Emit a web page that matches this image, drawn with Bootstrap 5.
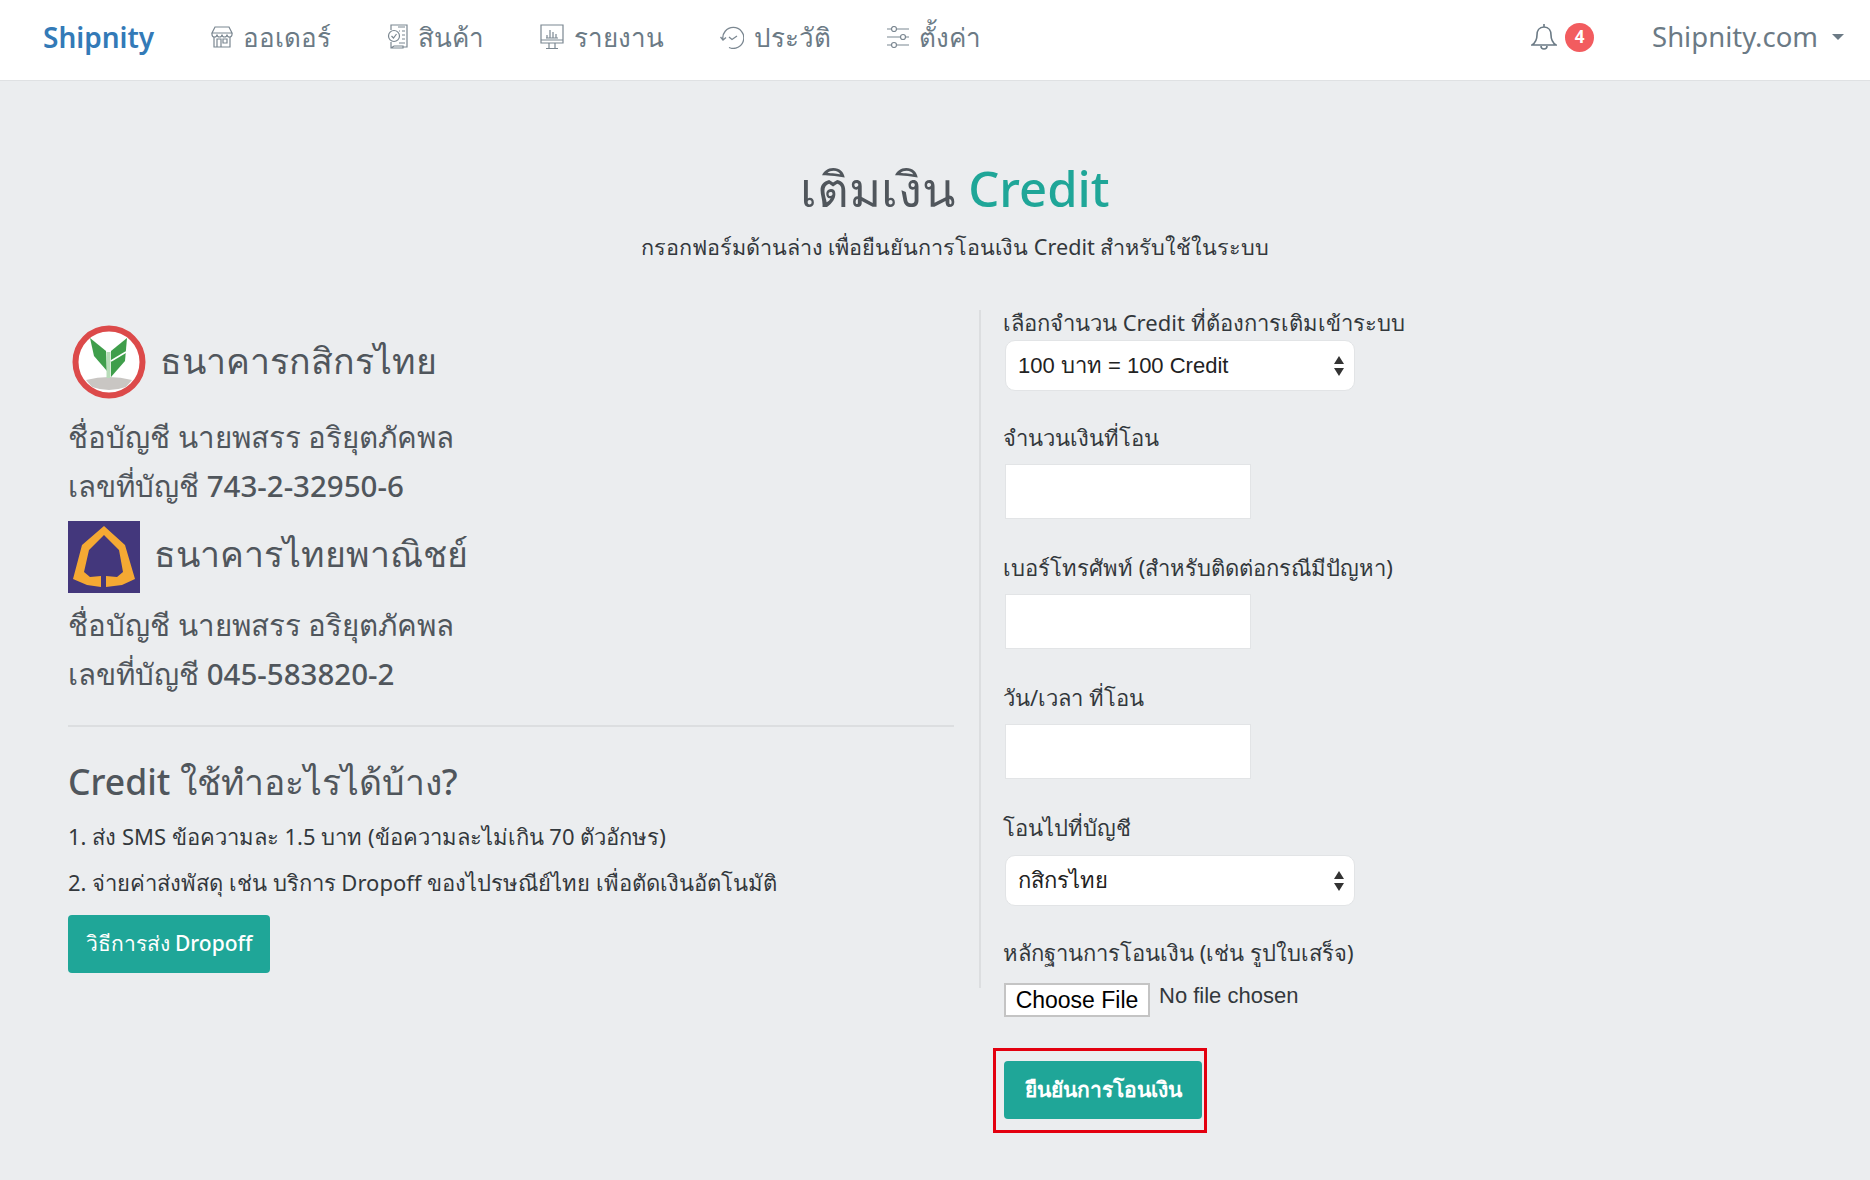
<!DOCTYPE html>
<html lang="th">
<head>
    <meta charset="UTF-8">
    <meta name="viewport" content="width=device-width, initial-scale=1.0">
    <title>เติมเงิน Credit</title>
    <link href="https://cdn.jsdelivr.net/npm/bootstrap@5.3.0/dist/css/bootstrap.min.css" rel="stylesheet">
    <style>
        body { background: #ebedef; font-family: "Noto Sans", "Open Sans", sans-serif; color: #50565c; }
        .top-bar { height: 81px; background: #fff; border-bottom: 1px solid #dfe1e3; padding: 0 26px 6px 43px; }
        .brand-name { color: #337ab7; font-size: 28px; font-weight: 600; width: 168px; text-decoration: none; }
        .menu-link { color: #6b7a85; font-size: 26px; text-decoration: none; margin-right: 56px; }
        .menu-link svg { margin-right: 10px; }
        .alert-dot { width: 29px; height: 29px; background: #f25c5f; color: #fff; font-size: 17px; font-weight: 700; }
        .site-name { color: #6b7a85; font-size: 27.500px; margin-left: 58px; }
        .site-caret { border-top: 6px solid #6b7a85; border-left: 6px solid transparent; border-right: 6px solid transparent; margin-left: 14px; }
        .head-block { padding-left: 40px; }
        .page-title { font-size: 49px; font-weight: 500; margin: 0; padding-top: 74px; line-height: 66px; color: #50565c; }
        .page-title span { color: #1fa698; }
        .page-sub { font-size: 21.600px; color: #33383c; margin: 10px 0 46px; line-height: 32px; }
        .pay-wrap { padding-left: 68px; }
        .left-pane { width: 886px; padding-top: 16px; }
        .right-pane { margin-left: 25px; }
        .bank-row { gap: 14px; }
        .bank-name { font-size: 35.700px; font-weight: 400; margin: 0; }
        .bank-one { padding-bottom: 3px; }
        .bank-two { padding-bottom: 8px; }
        .acc-one { margin-top: 13px; }
        .acc-two { margin-top: 7px; }
        .bank-row-two { margin-top: 11px; }
        .acc-line { font-size: 29.500px; font-weight: 500; margin: 0; line-height: 49px; }
        .split-line { border-top: 2px solid #dcdee0; opacity: 1; margin: 27px 0 24px; }
        .use-title { font-size: 35.500px; font-weight: 500; margin: 0 0 2px; line-height: 60px; }
        .use-line { font-size: 22px; color: #33383c; margin: 0; line-height: 46px; }
        .teal-btn { background: #1fa698; color: #fff; font-size: 21px; font-weight: 500; border: 0; border-radius: 4px; }
        .teal-btn:hover { background: #1c978a; color: #fff; }
        .how-btn { width: 202px; height: 58px; margin-top: 10px; }
        .field-stack { border-left: 2px solid #dcdee0; padding: 0 0 21px 22px; }
        .field-label { display: block; font-size: 22px; color: #33383c; margin: 33px 0 12px; line-height: 30px; }
        .field-label.first-label { margin: 1px 0 6px; line-height: 24px; }
        .field-label.after-pick { margin-top: 31px; }
        .field-label.before-pick { margin-bottom: 13px; }
        .field-label.last-label { margin-bottom: 0; }
        .pick-box.form-select { width: 350px; height: 51px; margin-left: 2px; font-size: 22px; color: #222; border: 1px solid #e2e4e6; border-radius: 10px; padding: 0 12px;
            font-family: "Liberation Sans", "Noto Sans", sans-serif;
            background-size: 12px 22px; background-position: right 9px center;
            background-image: url("data:image/svg+xml,%3Csvg xmlns='http://www.w3.org/2000/svg' viewBox='0 0 12 22'%3E%3Cpath fill='%23333' d='M6 1l5 8H1zM6 21l5-8H1z'/%3E%3C/svg%3E"); }
        .plain-box.form-control { width: 246px; height: 55px; margin-left: 2px; border: 1px solid #e2e4e6; border-radius: 0; }
        .file-row { margin: -5px 0 0 25px; }
        .file-btn { width: 146px; height: 34px; background: #fff; border: 2px solid #c4c4c4; font-size: 23px; color: #000; line-height: 30px; font-family: "Liberation Sans", sans-serif; text-align: center; }
        .file-note { font-size: 22px; color: #33383c; margin-left: 9px; font-family: "Liberation Sans", sans-serif; line-height: 26px; }
        .red-frame { width: 214px; height: 85px; border: 3px solid #e3000f; margin: 31px 0 0 14px; padding: 10px 0 0 8px; }
        .send-btn { width: 198px; height: 58px; font-weight: 600; }
    </style>
</head>
<body>
    <nav class="top-bar d-flex align-items-center">
        <a class="brand-name" href="#">Shipnity</a>
        <a class="menu-link d-flex align-items-center" href="#">
            <svg width="22" height="22" viewBox="0 0 22 22" fill="none" stroke="#7b8791" stroke-width="1.2"><path d="M4 1h14l3 6H1zM1 7v1.500a2.500 2.500 0 0 0 5 0 2.500 2.500 0 0 0 5 0 2.500 2.500 0 0 0 5 0 2.500 2.500 0 0 0 5 0V7M3 11v10h16V11M6 21v-8h4v8M12 13h4v4h-4z"/></svg>ออเดอร์
        </a>
        <a class="menu-link d-flex align-items-center" href="#">
            <svg width="21" height="26" viewBox="0 0 21 26" fill="none" stroke="#7b8791" stroke-width="1.2"><path d="M4 6V1h16v22h-4M4 18v6h12v-2H7l-3 2M11 3h7"/><circle cx="7" cy="12" r="5.500"/><path d="M4.500 12l2 2 3-4M15 7h3M15 11h3M15 15h3M12 7h1M12 19h6"/></svg>สินค้า
        </a>
        <a class="menu-link d-flex align-items-center" href="#">
            <svg width="24" height="26" viewBox="0 0 24 26" fill="none" stroke="#7b8791" stroke-width="1.2"><path d="M1 1h22v18H1zM1 16h22M9 19v5M15 19v5M6 24.500h12M6 14h12M7 14v-3M10 14V6M13 14V8M16 14v-4"/></svg>รายงาน
        </a>
        <a class="menu-link d-flex align-items-center" href="#">
            <svg width="24" height="24" viewBox="0 0 24 24" fill="none" stroke="#7b8791" stroke-width="1.3"><path d="M3 15A10.500 10.500 0 1 1 9 22.500M0.500 12l2.500 3 3-2.500M9 12l3 2.500 5-3.500"/></svg>ประวัติ
        </a>
        <a class="menu-link d-flex align-items-center" href="#">
            <svg width="22" height="22" viewBox="0 0 22 22" fill="none" stroke="#7b8791" stroke-width="1.2"><path d="M0 3h4M10 3h12M0 11h13M19 11h3M0 19h4M10 19h12"/><circle cx="7" cy="3" r="2.500"/><circle cx="16" cy="11" r="2.500"/><circle cx="7" cy="19" r="2.500"/></svg>ตั้งค่า
        </a>
        <div class="ms-auto d-flex align-items-center">
            <svg width="26" height="28" viewBox="0 0 26 28" fill="none" stroke="#6b7a85" stroke-width="1.6"><path d="M13 1v3M13 4c-5 0-7 4-7 8 0 5-2 8-5 10h24c-3-2-5-5-5-10 0-4-2-8-7-8zM10 23c0 4 6 4 6 0"/></svg>
            <span class="alert-dot rounded-circle d-flex align-items-center justify-content-center ms-2">4</span>
            <span class="site-name">Shipnity.com</span>
            <span class="site-caret"></span>
        </div>
    </nav>

    <div class="head-block text-center">
        <h1 class="page-title">เติมเงิน <span>Credit</span></h1>
        <p class="page-sub">กรอกฟอร์มด้านล่าง เพื่อยืนยันการโอนเงิน Credit สำหรับใช้ในระบบ</p>
    </div>

    <div class="pay-wrap d-flex align-items-start">
        <div class="left-pane">
            <div class="d-flex align-items-center bank-row">
                <svg class="ms-1" width="74" height="74" viewBox="0 0 74 74">
                    <circle cx="37" cy="37" r="33.500" fill="#fff" stroke="#dc4a4a" stroke-width="6"/>
                    <path d="M14 55Q37 49 60 55L54 62Q37 68 20 62z" fill="#c9c6c3"/>
                    <path d="M18 13L34 26 35 46 22 31z" fill="#3f9e4b"/>
                    <path d="M55 13L39 26 39 52 53 36z" fill="#3f9e4b"/>
                    <path d="M36.500 27V53" stroke="#b7dcb8" stroke-width="4"/>
                    <path d="M39 36L54 27" stroke="#fff" stroke-width="1.500"/>
                </svg>
                <h2 class="bank-name bank-one">ธนาคารกสิกรไทย</h2>
            </div>
            <div class="acc-one">
                <p class="acc-line">ชื่อบัญชี นายพสรร อริยุตภัคพล</p>
                <p class="acc-line">เลขที่บัญชี 743-2-32950-6</p>
            </div>
            <div class="d-flex align-items-center bank-row bank-row-two">
                <svg width="72" height="72" viewBox="0 0 72 72">
                    <rect width="72" height="72" fill="#43377c"/>
                    <path d="M36 5L57 24 67 58 54 64 38 66V55H33V66L19 64 5 58 14 24z" fill="#f5a933"/>
                    <path d="M36 14L51 29 55 51 49 56 38 55V66H33V55L22 56 16 51 21 29z" fill="#43377c"/>
                </svg>
                <h2 class="bank-name bank-two">ธนาคารไทยพาณิชย์</h2>
            </div>
            <div class="acc-two">
                <p class="acc-line">ชื่อบัญชี นายพสรร อริยุตภัคพล</p>
                <p class="acc-line">เลขที่บัญชี 045-583820-2</p>
            </div>
            <hr class="split-line">
            <h2 class="use-title">Credit ใช้ทำอะไรได้บ้าง?</h2>
            <p class="use-line">1. ส่ง SMS ข้อความละ 1.5 บาท (ข้อความละไม่เกิน 70 ตัวอักษร)</p>
            <p class="use-line">2. จ่ายค่าส่งพัสดุ เช่น บริการ Dropoff ของไปรษณีย์ไทย เพื่อตัดเงินอัตโนมัติ</p>
            <button type="button" class="btn teal-btn how-btn">วิธีการส่ง Dropoff</button>
        </div>

        <form class="right-pane">
            <div class="field-stack">
                <label class="field-label first-label">เลือกจำนวน Credit ที่ต้องการเติมเข้าระบบ</label>
                <select class="form-select pick-box"><option>100 บาท = 100 Credit</option></select>

                <label class="field-label after-pick">จำนวนเงินที่โอน</label>
                <input type="text" class="form-control plain-box">

                <label class="field-label">เบอร์โทรศัพท์ (สำหรับติดต่อกรณีมีปัญหา)</label>
                <input type="text" class="form-control plain-box">

                <label class="field-label">วัน/เวลา ที่โอน</label>
                <input type="text" class="form-control plain-box">

                <label class="field-label before-pick">โอนไปที่บัญชี</label>
                <select class="form-select pick-box"><option>กสิกรไทย</option></select>

                <label class="field-label after-pick last-label">หลักฐานการโอนเงิน (เช่น รูปใบเสร็จ)</label>
            </div>
            <div class="file-row d-flex align-items-start">
                <label class="file-btn">Choose File</label>
                <span class="file-note">No file chosen</span>
            </div>
            <div class="red-frame">
                <button type="submit" class="btn teal-btn send-btn">ยืนยันการโอนเงิน</button>
            </div>
        </form>
    </div>
</body>
</html>
